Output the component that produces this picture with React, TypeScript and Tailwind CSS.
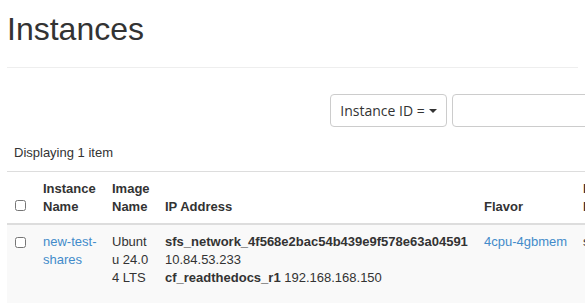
export default function App() {
  return (
    <div className="w-[585px] h-[303px] overflow-hidden bg-white text-[#333] font-['Liberation_Sans',Arial,sans-serif]">
      <div className="px-[7px]">
        {/* page header */}
        <div className="h-[68px] border-b border-[#eee] pt-[11px]">
          <h1 className="text-[32px] leading-[36px] text-[#333]">Instances</h1>
        </div>

        {/* filter */}
        <div className="flex w-[800px] pt-[26px] pl-[323px] gap-[5px]">
          <button className="h-[33px] w-[117px] shrink-0 border border-[#ccc] rounded-[4px] text-[14px] text-[#333] font-['Open_Sans',sans-serif] flex items-center justify-center gap-[4px]">
            Instance ID =
            <span className="border-x-[4px] border-x-transparent border-t-[4px] border-t-[#333] mt-[1px]" />
          </button>
          <input className="h-[33px] w-[200px] shrink-0 border border-[#ccc] rounded-[4px]" />
        </div>

        {/* table */}
        <div className="text-[13px] leading-[18px] mt-[16px]">
          <div className="h-[28px] pl-[7px] pt-[1px]">Displaying 1 item</div>
          <table className="w-[680px] border-collapse table-fixed">
            <colgroup>
              <col className="w-[28px]" />
              <col className="w-[69px]" />
              <col className="w-[53px]" />
              <col className="w-[319px]" />
              <col className="w-[99px]" />
              <col className="w-[112px]" />
            </colgroup>
            <thead>
              <tr className="border-t border-[#ddd] border-b-2 border-b-[#ddd]">
                <th className="px-[8px] pt-[8px] pb-[7px] align-bottom text-left">
                  <input type="checkbox" className="w-[11px] h-[11px] mb-[4px] align-middle" />
                </th>
                <th className="pl-[8px] pr-[2px] pt-[8px] pb-[7px] align-bottom text-left font-bold">Instance Name</th>
                <th className="px-[8px] pt-[8px] pb-[7px] align-bottom text-left font-bold">Image Name</th>
                <th className="px-[8px] pt-[8px] pb-[7px] align-bottom text-left font-bold">IP Address</th>
                <th className="px-[8px] pt-[8px] pb-[7px] align-bottom text-left font-bold">Flavor</th>
                <th className="px-[8px] pt-[8px] pb-[7px] align-bottom text-left font-bold">
                  <div>Key</div>
                  <div>Pair</div>
                </th>
              </tr>
            </thead>
            <tbody>
              <tr className="bg-[#f9f9f9]">
                <td className="px-[8px] pt-[8px] pb-[20px] align-top">
                  <input type="checkbox" className="w-[11px] h-[11px] align-middle" />
                </td>
                <td className="pl-[8px] pr-[2px] pt-[8px] pb-[20px] align-top">
                  <a className="text-[#428bca]">new-test-shares</a>
                </td>
                <td className="px-[8px] pt-[8px] pb-[20px] align-top break-all">Ubuntu 24.04 LTS</td>
                <td className="px-[8px] pt-[8px] pb-[20px] align-top">
                  <div><b>sfs_network_4f568e2bac54b439e9f578e63a04591</b></div>
                  <div>10.84.53.233</div>
                  <div><b>cf_readthedocs_r1</b> 192.168.168.150</div>
                </td>
                <td className="pl-[8px] pr-[2px] pt-[8px] pb-[20px] align-top whitespace-nowrap">
                  <a className="text-[#428bca]">4cpu-4gbmem</a>
                </td>
                <td className="px-[8px] pt-[8px] pb-[20px] align-top">sfs_key</td>
              </tr>
            </tbody>
          </table>
        </div>
      </div>
    </div>
  );
}
